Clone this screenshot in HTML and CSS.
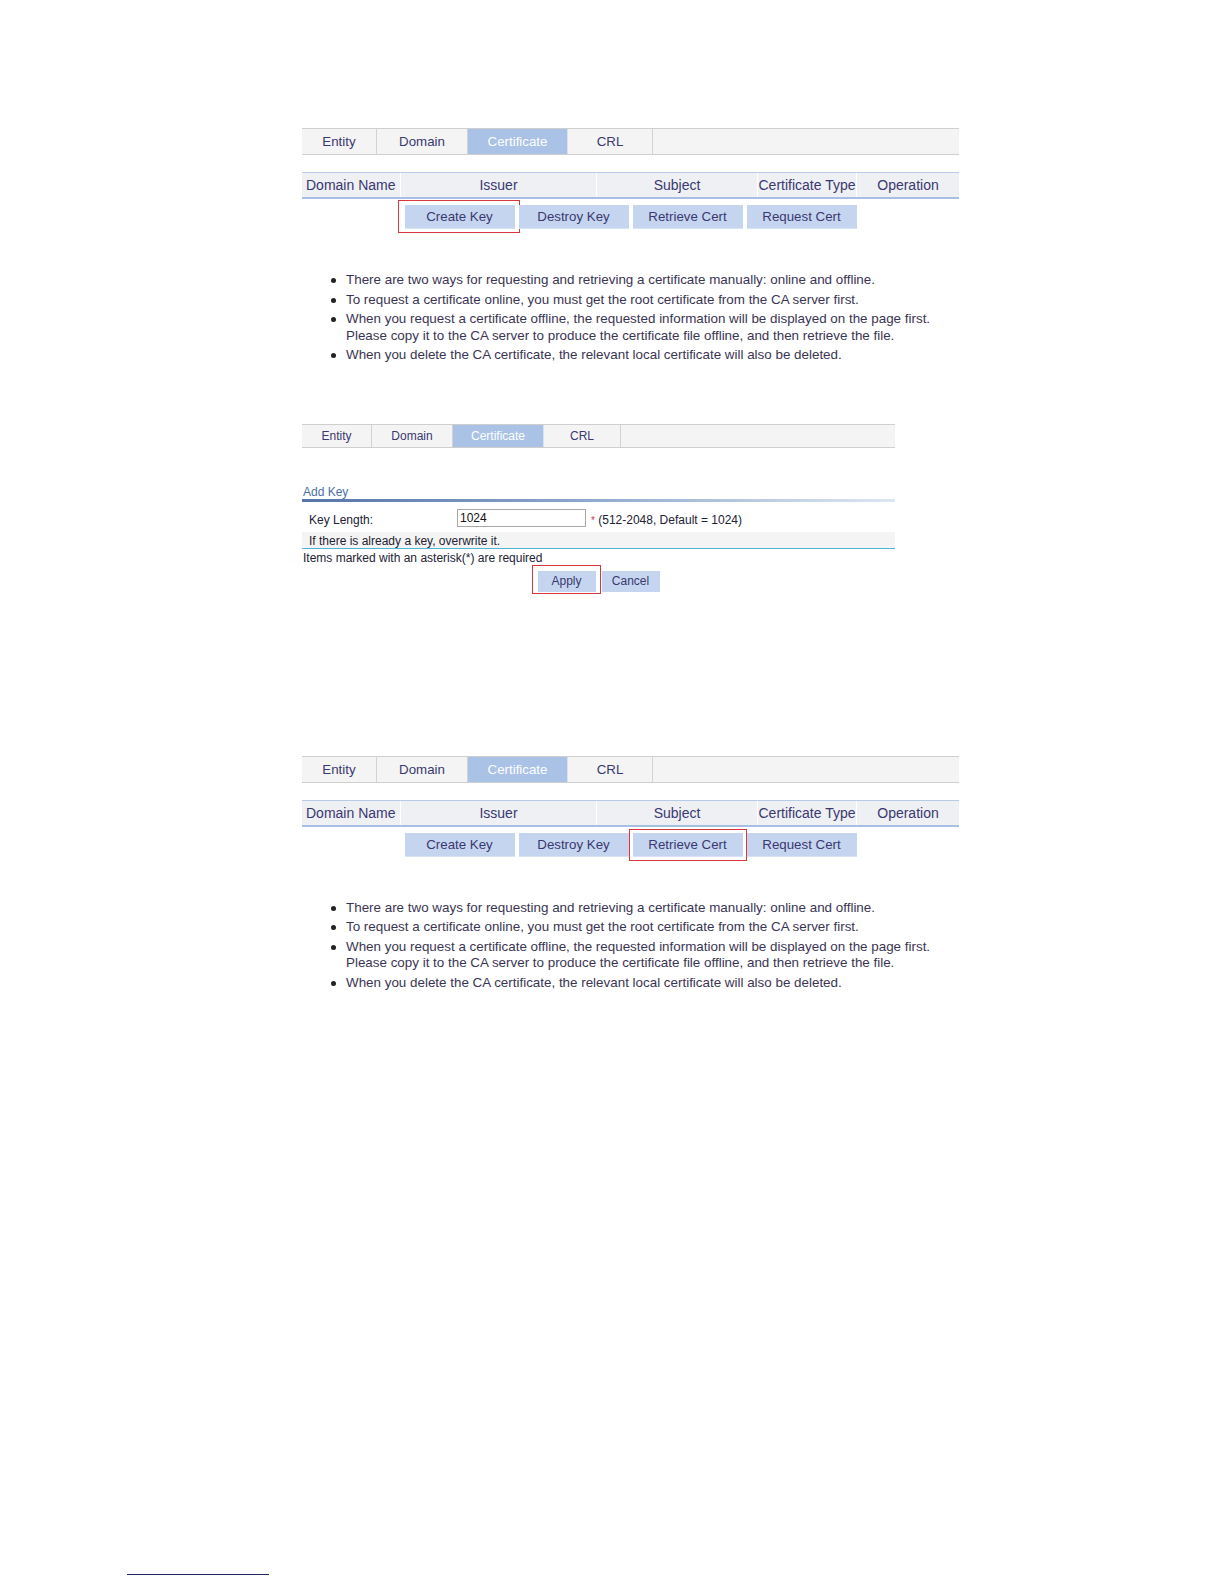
FILE: index.html
```html
<!DOCTYPE html>
<html>
<head>
<meta charset="utf-8">
<link rel="stylesheet" href="styles.css">
</head>
<body>
<div class="page">

  <section class="s1">
    <div class="tabs big">
      <div class="tab t-entity">Entity</div>
      <div class="tab t-domain">Domain</div>
      <div class="tab t-cert active">Certificate</div>
      <div class="tab t-crl">CRL</div>
      <div class="tab fill"></div>
    </div>
    <div class="thead">
      <div class="th c1">Domain Name</div>
      <div class="th c2">Issuer</div>
      <div class="th c3">Subject</div>
      <div class="th c4">Certificate Type</div>
      <div class="th c5">Operation</div>
    </div>
    <div class="btnrow">
      <div class="btn hl-a">Create Key</div>
      <div class="btn">Destroy Key</div>
      <div class="btn">Retrieve Cert</div>
      <div class="btn">Request Cert</div>
    </div>
    <ul class="notes">
      <li>There are two ways for requesting and retrieving a certificate manually: online and offline.</li>
      <li>To request a certificate online, you must get the root certificate from the CA server first.</li>
      <li>When you request a certificate offline, the requested information will be displayed on the page first.<br>Please copy it to the CA server to produce the certificate file offline, and then retrieve the file.</li>
      <li>When you delete the CA certificate, the relevant local certificate will also be deleted.</li>
    </ul>
  </section>

  <section class="s2">
    <div class="tabs small">
      <div class="tab t-entity">Entity</div>
      <div class="tab t-domain">Domain</div>
      <div class="tab t-cert active">Certificate</div>
      <div class="tab t-crl">CRL</div>
      <div class="tab fill"></div>
    </div>
    <div class="form">
      <div class="formtitle">Add Key</div>
      <div class="titlebar"></div>
      <div class="frow">
        <span class="flabel">Key Length:</span>
        <span class="finput">1024</span>
        <span class="fhint"><span class="req">*</span> (512-2048, Default = 1024)</span>
      </div>
      <div class="frow alt">If there is already a key, overwrite it.</div>
      <div class="required">Items marked with an asterisk(*) are required</div>
      <div class="formbtns">
        <div class="sbtn hl-b">Apply</div>
        <div class="sbtn">Cancel</div>
      </div>
    </div>
  </section>

  <section class="s3">
    <div class="tabs big">
      <div class="tab t-entity">Entity</div>
      <div class="tab t-domain">Domain</div>
      <div class="tab t-cert active">Certificate</div>
      <div class="tab t-crl">CRL</div>
      <div class="tab fill"></div>
    </div>
    <div class="thead">
      <div class="th c1">Domain Name</div>
      <div class="th c2">Issuer</div>
      <div class="th c3">Subject</div>
      <div class="th c4">Certificate Type</div>
      <div class="th c5">Operation</div>
    </div>
    <div class="btnrow">
      <div class="btn">Create Key</div>
      <div class="btn">Destroy Key</div>
      <div class="btn hl-c">Retrieve Cert</div>
      <div class="btn">Request Cert</div>
    </div>
    <ul class="notes">
      <li>There are two ways for requesting and retrieving a certificate manually: online and offline.</li>
      <li>To request a certificate online, you must get the root certificate from the CA server first.</li>
      <li>When you request a certificate offline, the requested information will be displayed on the page first.<br>Please copy it to the CA server to produce the certificate file offline, and then retrieve the file.</li>
      <li>When you delete the CA certificate, the relevant local certificate will also be deleted.</li>
    </ul>
  </section>

  <div class="footline"></div>
</div>
</body>
</html>
```

FILE: styles.css
```css
html, body {
  margin: 0;
  padding: 0;
  background: #ffffff;
}
body {
  font-family: "Liberation Sans", Arial, sans-serif;
  color: #3a3553;
}
.page {
  width: 1224px;
  height: 1584px;
  position: relative;
  overflow: hidden;
}
section {
  margin-left: 302px;
}
.s1 { padding-top: 128px; }
.s2 { padding-top: 60px; }
.s3 { padding-top: 164px; }

/* tabs */
.tabs {
  display: flex;
  background: #f4f4f4;
  border-top: 1px solid #cfcfcf;
  border-bottom: 1px solid #cfcfcf;
  box-sizing: border-box;
}
.tabs.big { width: 657px; height: 27px; font-size: 13.3px; }
.tabs.small { width: 593px; height: 24px; font-size: 12px; }
.tab {
  display: flex;
  align-items: center;
  justify-content: center;
  border-right: 1px solid #d2d2d2;
  box-sizing: border-box;
  color: #3a3870;
}
.tab.fill { flex: 1; border-right: none; }
.tab.active {
  background: #a9c2e6;
  color: #ffffff;
  border-right-color: #d8e3f2;
}
.big .t-entity { width: 75px; }
.big .t-domain { width: 91px; }
.big .t-cert { width: 100px; }
.big .t-crl { width: 85px; }
.small .t-entity { width: 70px; }
.small .t-domain { width: 81px; }
.small .t-cert { width: 91px; }
.small .t-crl { width: 77px; }

/* table header */
.thead {
  margin-top: 17px;
  width: 657px;
  height: 27px;
  display: flex;
  background: #eef0f4;
  border-top: 1px solid #b8cbe6;
  border-bottom: 2px solid #a7bfe2;
  box-sizing: border-box;
  font-size: 14px;
  color: #3a3870;
}
.th {
  display: flex;
  align-items: center;
  justify-content: center;
  border-right: 1px solid #ffffff;
  box-sizing: border-box;
}
.th:last-child { border-right: none; }
.c1 { width: 99px; justify-content: flex-start; padding-left: 4px; }
.c2 { width: 196px; }
.c3 { width: 161px; }
.c4 { width: 99px; }
.c5 { flex: 1; }

/* buttons */
.btnrow {
  width: 657px;
  margin-top: 6px;
  display: flex;
  justify-content: center;
  gap: 4px;
}
.btn {
  width: 110px;
  height: 24px;
  background: #c6d5ef;
  border-bottom: 1px solid #d9e3f4;
  box-sizing: border-box;
  display: flex;
  align-items: center;
  justify-content: center;
  font-size: 13.3px;
  color: #3a3870;
  position: relative;
}
.hl-a::after,
.hl-b::after,
.hl-c::after {
  content: "";
  position: absolute;
  border: 1px solid #d8383c;
  box-sizing: border-box;
}
.hl-a::after { left: -7px; top: -5px; width: 122px; height: 33px; }
.hl-c::after { left: -4px; top: -4px; width: 118px; height: 32px; }

/* notes */
.notes {
  margin: 43px 0 0 0;
  padding: 0 0 0 44px;
  list-style: none;
  font-size: 13.4px;
  color: #3a3553;
}
.notes li {
  position: relative;
  line-height: 16.2px;
  margin-bottom: 3.5px;
}
.notes li:last-child { margin-bottom: 0; }
.notes li::before {
  content: "";
  position: absolute;
  left: -15px;
  top: 6px;
  width: 5px;
  height: 5px;
  border-radius: 50%;
  background: #222222;
}

/* form */
.form {
  width: 593px;
  margin-top: 35px;
  font-size: 12px;
}
.formtitle {
  color: #4a6fa8;
  padding-left: 1px;
  height: 16px;
  line-height: 19px;
}
.titlebar {
  height: 3px;
  background: linear-gradient(to right, #5575a8 0%, #8aa5cb 45%, #dde7f3 100%);
}
.frow {
  display: flex;
  align-items: center;
  height: 30px;
  padding-top: 3px;
  box-sizing: border-box;
  padding-left: 7px;
  color: #222233;
}
.frow .flabel,
.frow .fhint { padding-top: 4px; }
.frow.alt {
  height: 17px;
  padding-top: 2px;
  background: #f4f4f4;
  border-bottom: 1px solid #4bb6d6;
}
.flabel { width: 148px; }
.finput {
  width: 129px;
  height: 18px;
  border: 1px solid #a8a8a8;
  box-sizing: border-box;
  padding-left: 2px;
  line-height: 16px;
  color: #111;
}
.fhint { margin-left: 5px; }
.req { color: #d0305a; font-size: 10px; }
.required {
  color: #222233;
  height: 15px;
  line-height: 15px;
  margin-top: 2px;
  padding-left: 1px;
}
.formbtns {
  margin-top: 5px;
  display: flex;
  justify-content: center;
  gap: 6px;
}
.sbtn {
  width: 58px;
  height: 21px;
  background: #c6d5ef;
  display: flex;
  align-items: center;
  justify-content: center;
  font-size: 12px;
  color: #3a3870;
  position: relative;
}
.hl-b::after { left: -6px; top: -6px; width: 69px; height: 29px; }

.footline {
  position: absolute;
  left: 127px;
  top: 1574px;
  width: 142px;
  height: 1px;
  background: #1f2a5c;
}
```
